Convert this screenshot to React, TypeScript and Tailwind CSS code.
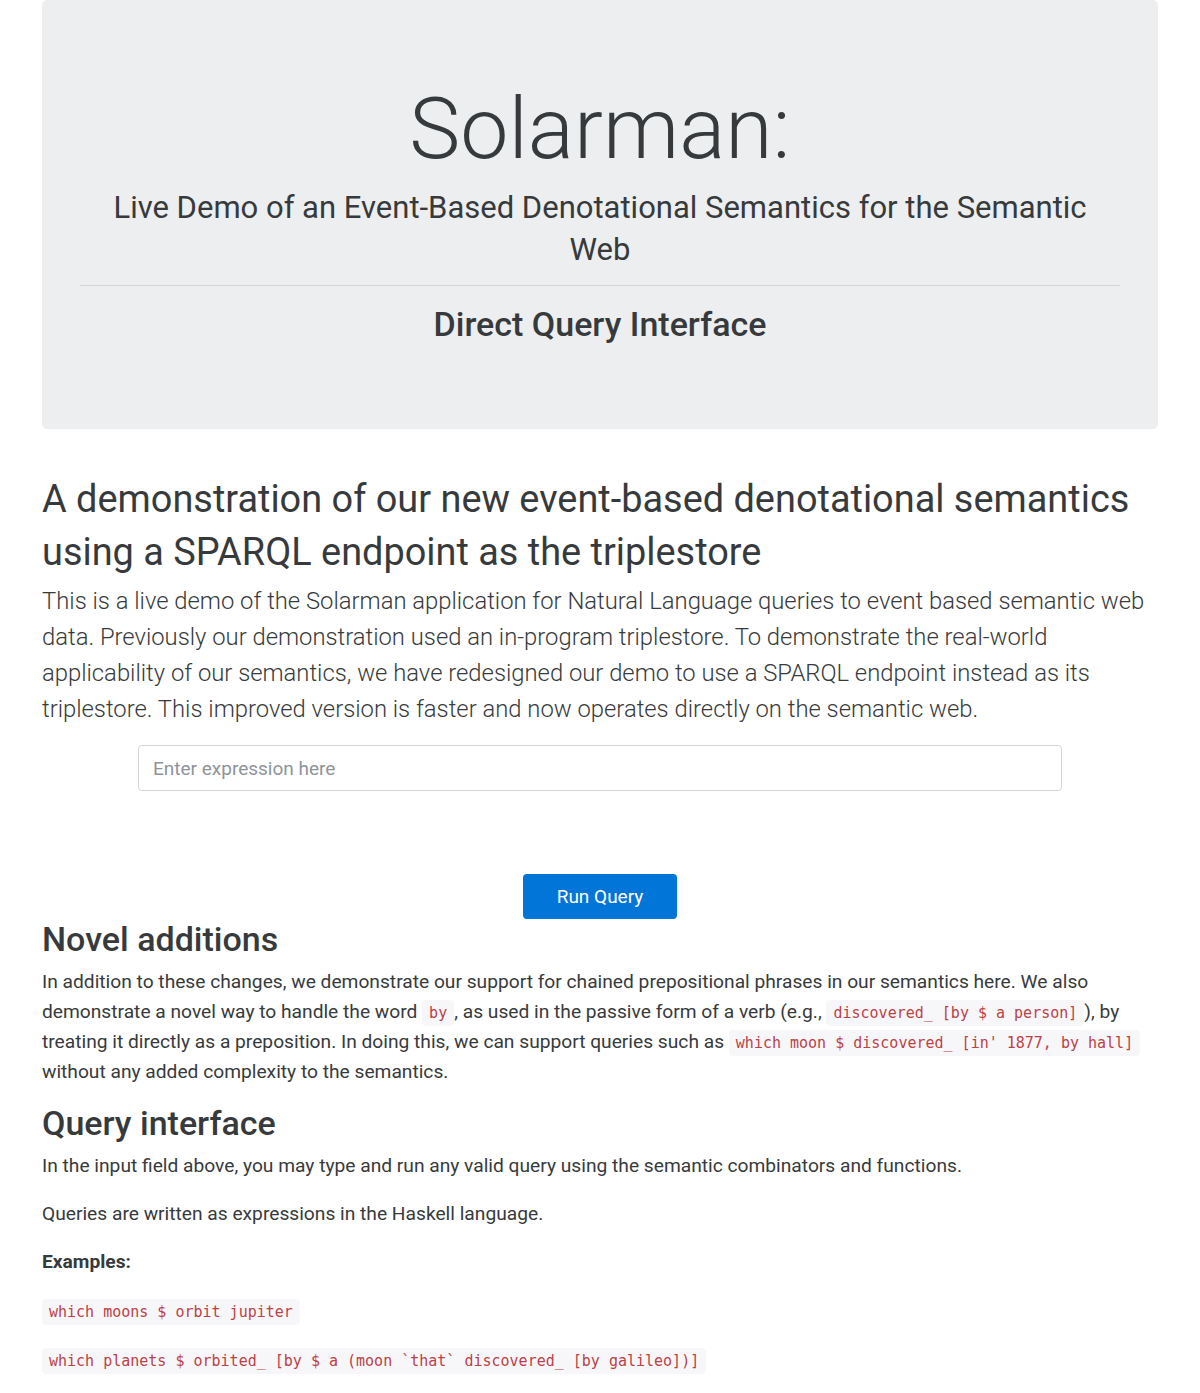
const examples = [
  "which moons $ orbit jupiter",
  "which planets $ orbited_ [by $ a (moon `that` discovered_ [by galileo])]",
];

const Code = ({ children }: { children: React.ReactNode }) => (
  <code className="font-['DejaVu_Sans_Mono',monospace] text-[15px] leading-none text-[#bd4147] bg-[#f7f7f9] rounded px-[7px] py-[4px]">
    {children}
  </code>
);

export default function App() {
  return (
    <div className="font-['Roboto',sans-serif] text-[#373a3c] bg-white px-[42px] pb-10">
      <div className="bg-[#eceeef] rounded-[5px] px-[38px] pt-[82px] pb-[85px] text-center">
        <h1 className="text-[86px] font-light leading-[1.1]">Solarman:</h1>
        <p className="text-[31px] leading-[42px] mt-[10px]">
          Live Demo of an Event-Based Denotational Semantics for the Semantic Web
        </p>
        <hr className="border-[#d4d6d8] mt-[14px] mb-[18px]" />
        <h3 className="text-[34px] font-medium leading-[1.2]">Direct Query Interface</h3>
      </div>

      <h2 className="text-[37.9px] leading-[53px] mt-[44px]">
        A demonstration of our new event-based denotational semantics using a SPARQL endpoint as the triplestore
      </h2>
      <p className="text-[23.8px] font-light leading-[36px] mt-[4px]">
        This is a live demo of the Solarman application for Natural Language queries to event based semantic web data.
        Previously our demonstration used an in-program triplestore. To demonstrate the real-world applicability of our
        semantics, we have redesigned our demo to use a SPARQL endpoint instead as its triplestore. This improved version
        is faster and now operates directly on the semantic web.
      </p>

      <div className="flex justify-center mt-[18px]">
        <input
          type="text"
          placeholder="Enter expression here"
          className="w-[924px] h-[46px] border border-[#d3d6d9] rounded-[4px] px-[14px] text-[19px] placeholder:text-[#8e9499] outline-none"
        />
      </div>

      <div className="flex justify-center mt-[83px]">
        <button className="bg-[#0275d8] text-white text-[19px] w-[154px] h-[45px] rounded-[4px]">Run Query</button>
      </div>

      <h3 className="text-[34px] font-medium leading-[1.2]">Novel additions</h3>
      <p className="text-[19.2px] leading-[30px] mt-[7px]">
        In addition to these changes, we demonstrate our support for chained prepositional phrases in our semantics here. We
        also demonstrate a novel way to handle the word <Code>by</Code>, as used in the passive form of a verb (e.g.,{" "}
        <Code>discovered_ [by $ a person]</Code>), by treating it directly as a preposition. In doing this, we can support
        queries such as <Code>which moon $ discovered_ [in' 1877, by hall]</Code> without any added complexity to the
        semantics.
      </p>

      <h3 className="text-[34px] font-medium leading-[1.2] mt-[16px]">Query interface</h3>
      <p className="text-[19.2px] leading-[30px] mt-[7px]">
        In the input field above, you may type and run any valid query using the semantic combinators and functions.
      </p>
      <p className="text-[19.2px] leading-[30px] mt-[18px]">Queries are written as expressions in the Haskell language.</p>
      <p className="text-[19.2px] leading-[30px] mt-[18px] font-bold">Examples:</p>
      {examples.map((ex) => (
        <p key={ex} className="text-[19.2px] leading-[30px] mt-[19px]">
          <Code>{ex}</Code>
        </p>
      ))}
    </div>
  );
}
